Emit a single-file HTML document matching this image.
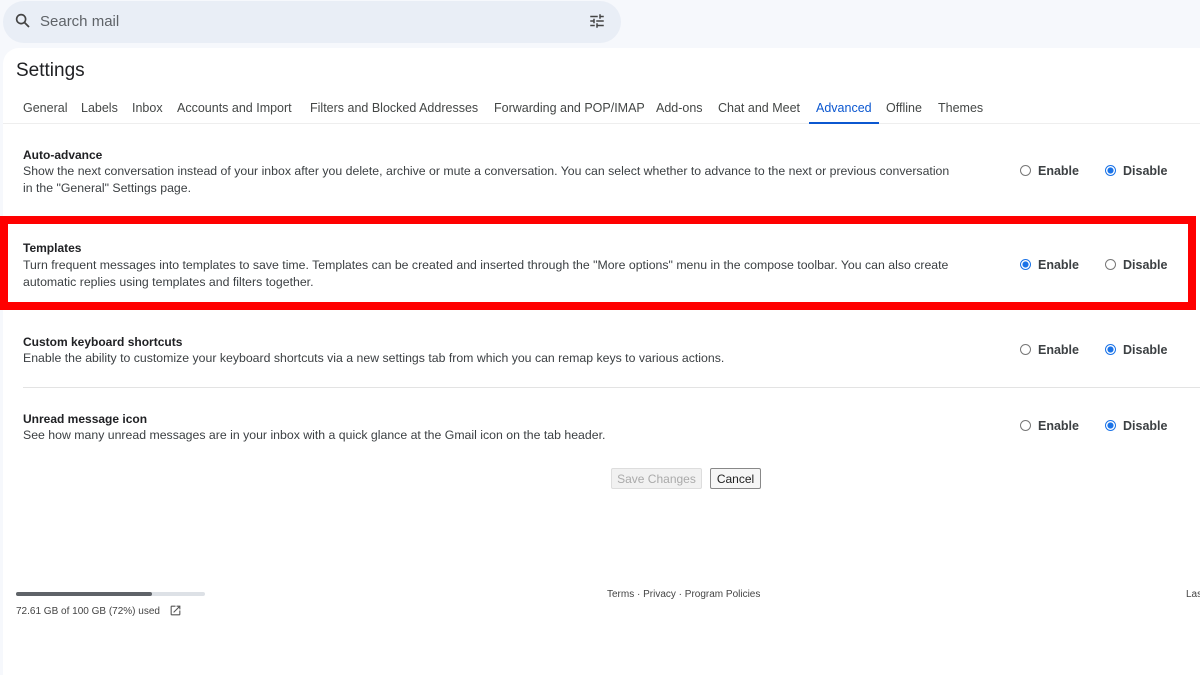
<!DOCTYPE html><html><head><style>
body{margin:0;width:1200px;height:675px;background:#f6f8fc;font-family:"Liberation Sans",sans-serif;color:#202124;position:relative;overflow:hidden}
.a{position:absolute;white-space:nowrap}
.card{position:absolute;left:3px;top:48px;width:1197px;height:627px;background:#fff;border-radius:16px 0 0 0}
.tab{position:absolute;top:101px;font-size:12.5px;color:#444746}
.t{font-size:12px;font-weight:bold;color:#202124}
.d{font-size:12.3px;color:#3c4043;line-height:17px}
.r{position:absolute;width:9px;height:9px;border:1px solid #777;border-radius:50%;background:#fff}
.r.on{border-color:#1a73e8;background:radial-gradient(circle,#1a73e8 0 2.8px,#fff 3.3px)}
.lb{font-size:12.5px;font-weight:bold;color:#3c4043}
</style></head><body>
<div class="a" style="left:3px;top:1px;width:618px;height:42px;background:#e9eef6;border-radius:21px"></div>
<svg class="a" style="left:14px;top:12px" width="18" height="18" viewBox="0 0 24 24"><circle cx="9.5" cy="9.5" r="6" fill="none" stroke="#444" stroke-width="2.2"/><path d="M14 14l6 6" stroke="#444" stroke-width="2.4"/></svg>
<div class="a" style="left:40px;top:13px;font-size:15px;color:#5f6368">Search mail</div>
<svg class="a" style="left:588px;top:12px" width="18" height="18" viewBox="0 0 24 24" fill="#444"><path d="M3 17v2h6v-2H3zM3 5v2h10V5H3zm10 16v-2h8v-2h-8v-2h-2v6h2zM7 9v2H3v2h4v2h2V9H7zm14 4v-2H11v2h10zm-6-4h2V7h4V5h-4V3h-2v6z"/></svg>
<div class="card"></div>
<div class="a" style="left:16px;top:60px;font-size:19px;color:#202124">Settings</div>
<div class="tab" style="left:23px">General</div><div class="tab" style="left:81px">Labels</div><div class="tab" style="left:132px">Inbox</div><div class="tab" style="left:177px">Accounts and Import</div><div class="tab" style="left:310px">Filters and Blocked Addresses</div><div class="tab" style="left:494px">Forwarding and POP/IMAP</div><div class="tab" style="left:656px">Add-ons</div><div class="tab" style="left:718px">Chat and Meet</div><div class="tab" style="left:816px;color:#0b57d0">Advanced</div><div class="tab" style="left:886px">Offline</div><div class="tab" style="left:938px">Themes</div>
<div class="a" style="left:3px;top:123px;width:1197px;height:1px;background:#eee"></div>
<div class="a" style="left:809px;top:122px;width:70px;height:2px;background:#0b57d0"></div>

<div class="a t" style="left:23px;top:148px">Auto-advance</div>
<div class="a d" style="left:23px;top:163px">Show the next conversation instead of your inbox after you delete, archive or mute a conversation. You can select whether to advance to the next or previous conversation<br>in the "General" Settings page.</div>
<div class="r" style="left:1020px;top:165px"></div><div class="a lb" style="left:1038px;top:164px">Enable</div>
<div class="r on" style="left:1105px;top:165px"></div><div class="a lb" style="left:1123px;top:164px">Disable</div>

<div class="a" style="left:0;top:216px;width:1180px;height:78px;border:8px solid #ff0000"></div>
<div class="a t" style="left:23px;top:241px">Templates</div>
<div class="a d" style="left:23px;top:257px">Turn frequent messages into templates to save time. Templates can be created and inserted through the "More options" menu in the compose toolbar. You can also create<br>automatic replies using templates and filters together.</div>
<div class="r on" style="left:1020px;top:259px"></div><div class="a lb" style="left:1038px;top:258px">Enable</div>
<div class="r" style="left:1105px;top:259px"></div><div class="a lb" style="left:1123px;top:258px">Disable</div>

<div class="a t" style="left:23px;top:335px">Custom keyboard shortcuts</div>
<div class="a d" style="left:23px;top:350px">Enable the ability to customize your keyboard shortcuts via a new settings tab from which you can remap keys to various actions.</div>
<div class="r" style="left:1020px;top:344px"></div><div class="a lb" style="left:1038px;top:343px">Enable</div>
<div class="r on" style="left:1105px;top:344px"></div><div class="a lb" style="left:1123px;top:343px">Disable</div>
<div class="a" style="left:23px;top:387px;width:1177px;height:1px;background:#e3e3e3"></div>

<div class="a t" style="left:23px;top:412px">Unread message icon</div>
<div class="a d" style="left:23px;top:427px">See how many unread messages are in your inbox with a quick glance at the Gmail icon on the tab header.</div>
<div class="r" style="left:1020px;top:420px"></div><div class="a lb" style="left:1038px;top:419px">Enable</div>
<div class="r on" style="left:1105px;top:420px"></div><div class="a lb" style="left:1123px;top:419px">Disable</div>

<div class="a" style="left:611px;top:468px;width:89px;height:19px;border:1px solid #ddd;background:#f1f1f1;border-radius:2px;font-size:12px;color:#aaa;text-align:center;line-height:20px">Save Changes</div>
<div class="a" style="left:710px;top:468px;width:49px;height:19px;border:1px solid #888;background:#f6f6f6;border-radius:2px;font-size:12px;color:#222;text-align:center;line-height:20px">Cancel</div>

<div class="a" style="left:16px;top:592px;width:189px;height:4px;background:#dde1e6;border-radius:2px"></div>
<div class="a" style="left:16px;top:592px;width:136px;height:4px;background:#5f6368;border-radius:2px"></div>
<div class="a" style="left:16px;top:606px;font-size:10px;color:#444">72.61 GB of 100 GB (72%) used</div>
<svg class="a" style="left:169px;top:604px" width="13" height="13" viewBox="0 0 24 24" fill="#555"><path d="M19 19H5V5h7V3H5a2 2 0 0 0-2 2v14a2 2 0 0 0 2 2h14a2 2 0 0 0 2-2v-7h-2v7zM14 3v2h3.6l-9.8 9.8 1.4 1.4L19 6.4V10h2V3h-7z"/></svg>
<div class="a" style="left:607px;top:589px;font-size:10px;color:#444">Terms · Privacy · Program Policies</div>
<div class="a" style="left:1186px;top:589px;font-size:10px;color:#444">Las</div>
</body></html>
